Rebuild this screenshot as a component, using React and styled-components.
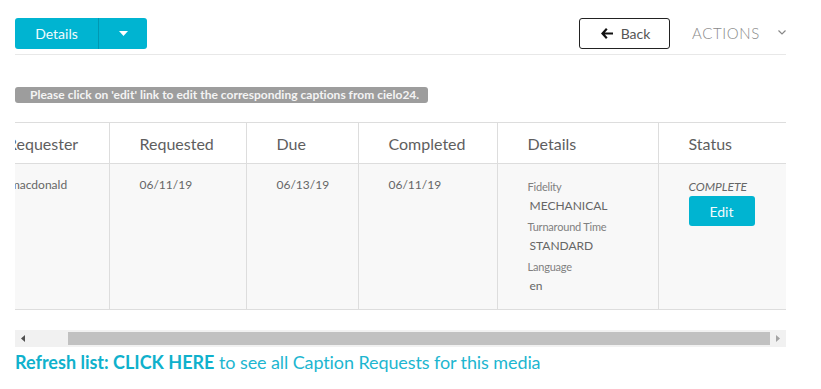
import React, { useLayoutEffect, useRef } from "react";
import styled, { createGlobalStyle } from "styled-components";

const GlobalStyle = createGlobalStyle`
  body {
    margin: 0;
    background: #ffffff;
    font-family: Lato, "Open Sans", sans-serif;
  }
`;

const TEAL = "#00b4d1";

const Page = styled.div`
  width: 771px;
  padding: 18px 0 0 15px;
`;

const Toolbar = styled.div`
  display: flex;
  align-items: center;
  height: 31px;
  padding-bottom: 5px;
  border-bottom: 1px solid #e8e8e8;
`;

const SplitButton = styled.div`
  display: flex;
  height: 31px;
  border-radius: 3px;
  overflow: hidden;
  background: ${TEAL};
`;

const SplitMain = styled.button`
  width: 84px;
  border: none;
  border-right: 1px solid #0098b2;
  background: transparent;
  color: #f2fbfd;
  font-family: Lato, sans-serif;
  font-size: 14px;
  padding: 0;
`;

const SplitCaret = styled.button`
  width: 48px;
  border: none;
  background: transparent;
  display: flex;
  align-items: center;
  justify-content: center;
  padding: 0;
`;

const Spacer = styled.div`
  flex: 1;
`;

const BackButton = styled.button`
  width: 91px;
  height: 31px;
  border: 1px solid #222;
  border-radius: 3px;
  background: #fff;
  color: #555;
  display: flex;
  align-items: center;
  justify-content: center;
  gap: 8px;
  font-family: Lato, sans-serif;
  font-size: 14px;
  padding: 0 0 1px 2px;
`;

const Actions = styled.div`
  margin-left: 22px;
  width: 94px;
  height: 31px;
  padding-bottom: 2px;
  box-sizing: border-box;
  display: flex;
  align-items: center;
  justify-content: space-between;
  color: #8a8a8a;
  font-size: 15px;
  font-weight: 300;
  letter-spacing: 0.6px;
`;

const Notice = styled.div`
  display: inline-block;
  margin-top: 32px;
  height: 16px;
  line-height: 16px;
  padding: 0 9px 0 15px;
  border-radius: 3px;
  background: #9d9d9d;
  color: #f4f4f4;
  font-size: 12px;
  font-weight: 700;
  letter-spacing: 0.02px;
  white-space: nowrap;
`;

const Scroller = styled.div`
  margin-top: 19px;
  width: 771px;
  overflow: hidden;
`;

const Table = styled.table`
  width: 809px;
  border-collapse: collapse;
  table-layout: fixed;
  color: #666;
`;

const Th = styled.th`
  height: 40px;
  padding: 0 0 0 30px;
  text-align: left;
  font-weight: 400;
  font-size: 16px;
  color: #5e5e5e;
  border-top: 1px solid #dddddd;
  border-bottom: 1px solid #dddddd;
  border-left: ${(p) => (p.$first ? "none" : "1px solid #dddddd")};
  white-space: nowrap;
  overflow: hidden;
`;

const Td = styled.td`
  height: 146px;
  padding: 13px 0 0 30px;
  vertical-align: top;
  background: #f8f8f8;
  font-size: 12px;
  border-bottom: 1px solid #dddddd;
  border-left: ${(p) => (p.$first ? "none" : "1px solid #dddddd")};
  box-sizing: border-box;
`;

const DetailLabel = styled.div`
  font-size: 11px;
  color: #808080;
  line-height: 19px;
  letter-spacing: -0.2px;
`;

const DetailValue = styled.div`
  font-size: 12px;
  color: #666;
  line-height: 21px;
  padding-left: 2px;
  margin-top: -1px;
  margin-bottom: 1px;
`;

const StatusText = styled.div`
  font-style: italic;
  font-size: 12px;
  line-height: 18px;
  color: #666;
  margin-top: 1px;
`;

const EditButton = styled.button`
  width: 66px;
  height: 30px;
  border: none;
  border-radius: 3px;
  background: ${TEAL};
  color: #f2fbfd;
  font-family: Lato, sans-serif;
  font-size: 14px;
  padding: 0;
`;

const ScrollBar = styled.div`
  margin-top: 20px;
  height: 17px;
  background: #f1f1f1;
  display: flex;
  align-items: center;
`;

const ScrollArrow = styled.div`
  width: 16px;
  height: 17px;
  display: flex;
  align-items: center;
  justify-content: center;
`;

const ScrollTrack = styled.div`
  flex: 1;
  height: 13px;
  padding-left: 37px;
  display: flex;
`;

const ScrollThumb = styled.div`
  flex: 1;
  background: #c1c1c1;
`;

const RefreshLine = styled.div`
  margin-top: 4px;
  font-size: 18px;
  color: #1db6d0;
  white-space: nowrap;
`;

const Plain = styled.span`
  letter-spacing: -0.1px;
`;

const Bold = styled.span`
  font-weight: 700;
  color: #0fb1cc;
`;

const columns = [
  { title: "Requester", width: 132 },
  { title: "Requested", width: 137 },
  { title: "Due", width: 112 },
  { title: "Completed", width: 139 },
  { title: "Details", width: 161 },
  { title: "Status", width: 128 },
];

const details = [
  ["Fidelity", "MECHANICAL"],
  ["Turnaround Time", "STANDARD"],
  ["Language", "en"],
];

export default function App() {
  const scrollRef = useRef(null);

  useLayoutEffect(() => {
    if (scrollRef.current) scrollRef.current.scrollLeft = 38;
  }, []);

  return (
    <Page>
      <GlobalStyle />
      <Toolbar>
        <SplitButton>
          <SplitMain>Details</SplitMain>
          <SplitCaret>
            <svg width="9" height="5" viewBox="0 0 9 5">
              <path d="M0 0h9L4.5 5z" fill="#fff" />
            </svg>
          </SplitCaret>
        </SplitButton>
        <Spacer />
        <BackButton>
          <svg width="12" height="11" viewBox="0 0 12 11">
            <path d="M5 0L0 5.5 5 11l1.6-1.5L3.9 6.6H12V4.4H3.9l2.7-2.9z" fill="#111" />
          </svg>
          Back
        </BackButton>
        <Actions>
          ACTIONS
          <svg width="8" height="5" viewBox="0 0 8 5">
            <path d="M0.5 0.5L4 4l3.5-3.5" stroke="#888" strokeWidth="1.2" fill="none" />
          </svg>
        </Actions>
      </Toolbar>

      <Notice>Please click on 'edit' link to edit the corresponding captions from cielo24.</Notice>

      <Scroller ref={scrollRef}>
        <Table>
          <colgroup>
            {columns.map((c) => (
              <col key={c.title} style={{ width: c.width }} />
            ))}
          </colgroup>
          <thead>
            <tr>
              {columns.map((c, idx) => (
                <Th key={c.title} $first={idx === 0}>
                  {c.title}
                </Th>
              ))}
            </tr>
          </thead>
          <tbody>
            <tr>
              <Td $first>jmacdonald</Td>
              <Td>06/11/19</Td>
              <Td>06/13/19</Td>
              <Td>06/11/19</Td>
              <Td>
                {details.map(([label, value]) => (
                  <React.Fragment key={label}>
                    <DetailLabel>{label}</DetailLabel>
                    <DetailValue>{value}</DetailValue>
                  </React.Fragment>
                ))}
              </Td>
              <Td>
                <StatusText>COMPLETE</StatusText>
                <EditButton>Edit</EditButton>
              </Td>
            </tr>
          </tbody>
        </Table>
      </Scroller>

      <ScrollBar>
        <ScrollArrow>
          <svg width="4" height="7" viewBox="0 0 4 7">
            <path d="M4 0v7L0 3.5z" fill="#505050" />
          </svg>
        </ScrollArrow>
        <ScrollTrack>
          <ScrollThumb />
        </ScrollTrack>
        <ScrollArrow>
          <svg width="4" height="7" viewBox="0 0 4 7">
            <path d="M0 0v7l4-3.5z" fill="#a3a3a3" />
          </svg>
        </ScrollArrow>
      </ScrollBar>

      <RefreshLine>
        <Bold>Refresh list: CLICK HERE</Bold> <Plain>to see all Caption Requests for this media</Plain>
      </RefreshLine>
    </Page>
  );
}
